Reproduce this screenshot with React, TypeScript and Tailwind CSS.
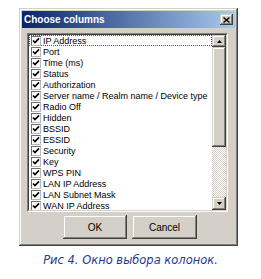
import React from "react";

const items = [
  "IP Address",
  "Port",
  "Time (ms)",
  "Status",
  "Authorization",
  "Server name / Realm name / Device type",
  "Radio Off",
  "Hidden",
  "BSSID",
  "ESSID",
  "Security",
  "Key",
  "WPS PIN",
  "LAN IP Address",
  "LAN Subnet Mask",
  "WAN IP Address",
];

const raised =
  "bg-[#d4d0c8] shadow-[inset_-1px_-1px_0_#404040,inset_1px_1px_0_#d4d0c8,inset_-2px_-2px_0_#808080,inset_2px_2px_0_#ffffff]";

function Check() {
  return (
    <div className="w-[10px] h-[10px] shrink-0 bg-white border border-t-[#707070] border-l-[#707070] border-b-[#b8b8b8] border-r-[#b8b8b8] flex items-center justify-center">
      <svg width="8" height="8" viewBox="0 0 8 8">
        <path d="M1 3.5 L3 5.6 L7 1.4" stroke="#000" strokeWidth="1.7" fill="none" />
      </svg>
    </div>
  );
}

export default function App() {
  return (
    <div className="w-[261px] h-[279px] bg-white overflow-hidden pt-[8px] pl-[19px] font-['Liberation_Sans',Arial,sans-serif]">
      <div className="w-[219px] h-[238px] bg-[#d4d0c8] p-[3px] flex flex-col shadow-[inset_-1px_-1px_0_#404040,inset_1px_1px_0_#d4d0c8,inset_-2px_-2px_0_#808080,inset_2px_2px_0_#ffffff]">
        <div className="h-[17px] shrink-0 flex items-center justify-between pl-[2px] pr-[2px] bg-[linear-gradient(to_right,#0a246a,#a6caf0)]">
          <span className="text-white font-bold text-[10px] leading-none">Choose columns</span>
          <div className={`w-[13px] h-[11px] ${raised} flex items-center justify-center`}>
            <svg width="7" height="6" viewBox="0 0 7 6">
              <path d="M0.5 0.5 L6.5 5.5 M6.5 0.5 L0.5 5.5" stroke="#000" strokeWidth="1.4" />
            </svg>
          </div>
        </div>
        <div className="ml-[5px] mt-[5px] w-[201px] h-[179px] flex border border-t-[#808080] border-l-[#808080] border-b-white border-r-white">
          <div className="flex-1 flex border border-t-[#404040] border-l-[#404040] border-b-[#d4d0c8] border-r-[#d4d0c8] bg-white overflow-hidden">
            <div className="flex-1 flex flex-col overflow-hidden">
              {items.map((t, i) => (
                <div
                  key={t}
                  className={`h-[11px] shrink-0 flex items-center gap-[2px] pl-[1px] ${
                    i === 0 ? "border border-dotted border-[#555]" : "border border-transparent"
                  }`}
                >
                  <Check />
                  <span className="text-[9px] leading-[10px] text-black whitespace-nowrap">{t}</span>
                </div>
              ))}
            </div>
            <div className="w-[14px] shrink-0 flex flex-col">
              <div className={`h-[12px] shrink-0 ${raised} flex items-center justify-center`}>
                <svg width="5" height="3" viewBox="0 0 5 3">
                  <path d="M2.5 0 L5 3 L0 3 Z" fill="#000" />
                </svg>
              </div>
              <div className={`h-[100px] shrink-0 ${raised}`} />
              <div className="flex-1 bg-[repeating-conic-gradient(#d4d0c8_0%_25%,#ffffff_0%_50%)] bg-[length:2px_2px]" />
              <div className={`h-[13px] shrink-0 ${raised} flex items-center justify-center`}>
                <svg width="5" height="3" viewBox="0 0 5 3">
                  <path d="M0 0 L5 0 L2.5 3 Z" fill="#000" />
                </svg>
              </div>
            </div>
          </div>
        </div>
        <div className="flex gap-[5px] ml-[41px] mt-[3px]">
          <div className={`w-[64px] h-[24px] ${raised} flex items-center justify-center text-[10px] text-black`}>OK</div>
          <div className={`w-[65px] h-[24px] ${raised} flex items-center justify-center text-[10px] text-black`}>Cancel</div>
        </div>
      </div>
      <div className="mt-[7px] -ml-[19px] w-[261px] text-center italic text-[11.5px] leading-[14px] text-[#1c3a8f] font-['DejaVu_Sans',Verdana,sans-serif]">
        Рис 4. Окно выбора колонок.
      </div>
    </div>
  );
}
